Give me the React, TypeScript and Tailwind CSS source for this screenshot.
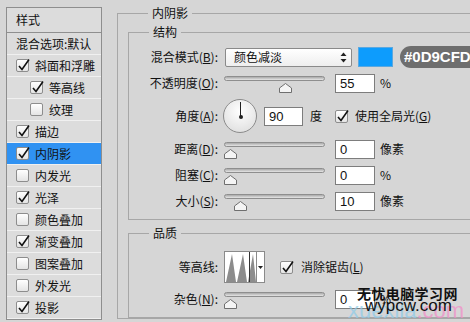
import React from "react";

const cjk = { fontFamily: '"Noto Sans CJK SC", "Noto Sans", sans-serif' };
const latin = { fontFamily: '"Liberation Sans", Arial, sans-serif' };

function Check({ on }: { on: boolean }) {
  return (
    <span className="relative inline-block w-[13px] h-[13px] shrink-0 rounded-[2px] border border-[#8d8d8d] bg-gradient-to-b from-white to-[#e4e4e4]">
      {on && (
        <svg className="absolute -left-[1px] -top-[2px]" width="15" height="15" viewBox="0 0 15 15">
          <polyline points="3,8 6,11.5 13,1.5" fill="none" stroke="#111" strokeWidth="1.6" />
        </svg>
      )}
    </span>
  );
}

const styles = [
  { name: "斜面和浮雕", on: true },
  { name: "等高线", on: true, sub: true },
  { name: "纹理", on: false, sub: true },
  { name: "描边", on: true },
  { name: "内阴影", on: true, active: true },
  { name: "内发光", on: false },
  { name: "光泽", on: true },
  { name: "颜色叠加", on: false },
  { name: "渐变叠加", on: true },
  { name: "图案叠加", on: false },
  { name: "外发光", on: false },
  { name: "投影", on: true },
];

function Slider({ pos }: { pos: number }) {
  return (
    <div className="relative w-[101px] h-[20px] shrink-0">
      <div className="mt-[5px] h-[5px] rounded-full border border-[#8e8e8e] bg-gradient-to-b from-[#a9a9a9] to-[#e6e6e6]" />
      <svg className="absolute top-[7px]" style={{ left: pos - 3 }} width="13" height="10" viewBox="0 0 13 10">
        <polygon points="6.5,0.5 12.5,5 12.5,9.5 0.5,9.5 0.5,5" fill="#f4f4f4" stroke="#6f6f6f" />
      </svg>
    </div>
  );
}

function Field({ value }: { value: string }) {
  return (
    <div className="w-[40px] h-[19px] shrink-0 bg-white border border-[#7d7d7d] pl-[4px] text-[13px] leading-[17px] text-[#111]" style={latin}>
      {value}
    </div>
  );
}

function Label({ children }: { children: React.ReactNode }) {
  return <div className="w-[89px] shrink-0 text-right text-[12px] text-[#111]">{children}</div>;
}

function SliderRow({ label, pos, value, unit }: { label: React.ReactNode; pos: number; value: string; unit: string }) {
  return (
    <div className="flex items-center h-[20px]">
      <Label>{label}</Label>
      <div className="ml-[6px]">
        <Slider pos={pos} />
      </div>
      <div className="ml-[10px]">
        <Field value={value} />
      </div>
      <span className="ml-[5px] text-[12px] text-[#111]">{unit}</span>
    </div>
  );
}

export default function App() {
  return (
    <div className="relative w-[470px] h-[322px] overflow-hidden bg-[#d6d6d6] flex" style={cjk}>
      {/* style list */}
      <div className="ml-[6px] mt-[7px] w-[96px] shrink-0 self-start border border-[#8e8e8e] bg-[#dcdcdc] text-[12px] text-[#111]">
        <div className="h-[25px] flex items-center pl-[9px] border-b border-[#8f8f8f]">样式</div>
        <div className="h-[22px] flex items-center pl-[9px] border-b border-[#f0f0f0]">混合选项:默认</div>
        {styles.map((s) => (
          <div
            key={s.name}
            className={`h-[22px] flex items-center gap-[6px] border-b border-[#f0f0f0] ${s.sub ? "pl-[23px]" : "pl-[9px]"} ${s.active ? "bg-[#3092f2]" : ""}`}
          >
            <Check on={s.on} />
            <span>{s.name}</span>
          </div>
        ))}
      </div>

      {/* settings */}
      <div className="ml-[15px] pt-[5px]">
        <fieldset className="w-[400px] border border-[#a7a7a7] pl-[10px]">
          <legend className="ml-[20px] px-[4px] text-[12px] leading-[16px] text-[#111]">内阴影</legend>

          <fieldset className="mt-[3px] w-[400px] border border-[#a7a7a7]">
            <legend className="ml-[20px] px-[4px] text-[12px] leading-[16px] text-[#111]">结构</legend>
            <div className="flex flex-col gap-[6px] pt-[7px] pb-[8px]">
              <div className="flex items-center h-[20px]">
                <Label>
                  混合模式(<u>B</u>):
                </Label>
                <div className="ml-[7px] w-[127px] h-[19px] rounded-[2px] border border-[#8a8a8a] bg-gradient-to-b from-white to-[#eeeeee] flex items-center justify-between pl-[8px] pr-[4px] text-[12px] text-[#111]">
                  <span>颜色减淡</span>
                  <svg width="7" height="11" viewBox="0 0 7 11">
                    <polygon points="3.5,0.5 6.5,4 0.5,4" fill="#222" />
                    <polygon points="0.5,7 6.5,7 3.5,10.5" fill="#222" />
                  </svg>
                </div>
                <div className="ml-[6px] w-[35px] h-[20px] bg-[#0d9cfd] border border-[#5aa8e0]" />
                <div className="ml-[7px] h-[22px] pl-[4px] pr-[10px] rounded-full bg-[#6e6e6e] flex items-center text-[15px] font-bold text-white" style={latin}>
                  #0D9CFD
                </div>
              </div>

              <SliderRow label={<>不透明度(<u>O</u>):</>} pos={58} value="55" unit="%" />

              <div className="flex items-center h-[34px]">
                <Label>
                  角度(<u>A</u>):
                </Label>
                <div className="ml-[5px] relative w-[34px] h-[34px] shrink-0 rounded-full border border-[#8b8b8b] bg-[radial-gradient(circle_at_50%_35%,#ffffff,#dadada)]">
                  <div className="absolute left-[16px] top-[2px] w-px h-[14px] bg-[#222]" />
                  <div className="absolute left-[14.5px] top-[14.5px] w-[4px] h-[4px] rounded-full bg-[#222]" />
                </div>
                <div className="ml-[7px] w-[39px] h-[19px] bg-white border border-[#7d7d7d] pl-[4px] text-[13px] leading-[17px] text-[#111]" style={latin}>
                  90
                </div>
                <span className="ml-[7px] text-[12px] text-[#111]">度</span>
                <div className="ml-[13px] flex items-center gap-[7px] text-[12px] text-[#111]">
                  <Check on={true} />
                  <span>
                    使用全局光(<u>G</u>)
                  </span>
                </div>
              </div>

              <SliderRow label={<>距离(<u>D</u>):</>} pos={3} value="0" unit="像素" />
              <SliderRow label={<>阻塞(<u>C</u>):</>} pos={3} value="0" unit="%" />
              <SliderRow label={<>大小(<u>S</u>):</>} pos={13} value="10" unit="像素" />
            </div>
          </fieldset>

          <fieldset className="mt-[5px] w-[400px] border border-[#a7a7a7]">
            <legend className="ml-[20px] px-[4px] text-[12px] leading-[16px] text-[#111]">品质</legend>
            <div className="flex flex-col gap-[6px] pt-[10px] pb-[8px]">
              <div className="flex items-center h-[32px]">
                <Label>等高线:</Label>
                <div className="ml-[6px] w-[41px] h-[32px] shrink-0 border border-[#8a8a8a] bg-white flex">
                  <svg width="31" height="30" viewBox="0 0 31 30">
                    <polygon points="1,30 7,2 11,30 12,30 18,2 22,30 23,30 28,2 31,30" fill="#8c8c8c" />
                    <line x1="24.5" y1="0" x2="24.5" y2="30" stroke="#333" strokeWidth="1" />
                  </svg>
                  <div className="flex-1 border-l border-[#8a8a8a] flex items-center justify-center">
                    <svg width="5" height="3" viewBox="0 0 5 3">
                      <polygon points="0,0 5,0 2.5,3" fill="#222" />
                    </svg>
                  </div>
                </div>
                <div className="ml-[15px] flex items-center gap-[8px] text-[12px] text-[#111]">
                  <Check on={true} />
                  <span>
                    消除锯齿(<u>L</u>)
                  </span>
                </div>
              </div>
              <SliderRow label={<>杂色(<u>N</u>):</>} pos={3} value="0" unit="%" />
            </div>
          </fieldset>
        </fieldset>
      </div>

      {/* watermark */}
      <div className="absolute left-[348px] top-[300px] text-[22px] leading-[22px] opacity-70" style={latin}>
        <span className="text-[#8ccbea]">xuexila</span>
        <span className="text-[#f28cc8]">.com</span>
      </div>
      <div className="absolute left-[357px] top-[285px] text-[14px] leading-[16px] font-bold tracking-[0.4px] text-[#111]">
        无忧电脑学习网
      </div>
      <div className="absolute left-[365px] top-[298px] text-[17px] leading-[16px] text-[#111]" style={latin}>
        wypcw.com
      </div>
    </div>
  );
}
